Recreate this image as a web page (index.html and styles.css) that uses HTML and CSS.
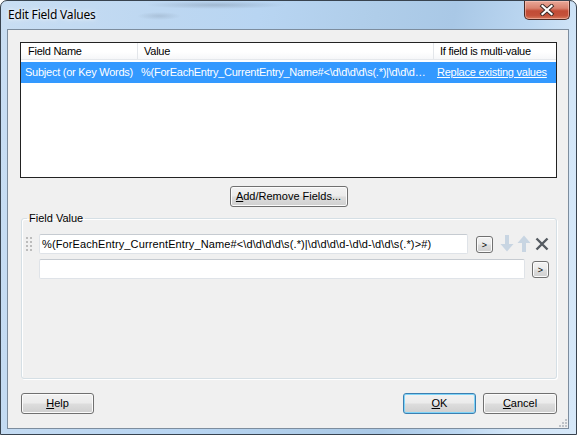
FILE: index.html
```html
<!DOCTYPE html>
<html>
<head>
<meta charset="utf-8">
<title>Edit Field Values</title>
<link rel="stylesheet" href="styles.css">
</head>
<body>
<div class="window">
  <div class="titlebar">
    <span class="title">Edit Field Values</span>
    <button class="close" aria-label="Close">
      <svg width="16" height="12" viewBox="0 0 16 12">
        <path d="M3.5 2 L12.5 10 M12.5 2 L3.5 10" stroke="#3b2a26" stroke-width="4" stroke-linecap="square" fill="none"/>
        <path d="M3.5 2 L12.5 10 M12.5 2 L3.5 10" stroke="#ffffff" stroke-width="2.2" stroke-linecap="square" fill="none"/>
      </svg>
    </button>
  </div>
  <div class="client">
    <div class="listview">
      <div class="lv-header">
        <div class="col c1">Field Name</div>
        <div class="col c2">Value</div>
        <div class="col c3">If field is multi-value</div>
      </div>
      <div class="lv-row selected">
        <div class="col c1">Subject (or Key Words)</div>
        <div class="col c2">%(ForEachEntry_CurrentEntry_Name#&lt;\d\d\d\d\s(.*)|\d\d\d\d-\d\d-\d\d\s(.*)&gt;#)</div>
        <div class="col c3"><span class="link">Replace existing values</span></div>
      </div>
    </div>

    <button class="btn addremove"><u>A</u>dd/Remove Fields...</button>

    <fieldset class="group">
      <legend>Field Value</legend>
      <div class="value-row first">
        <svg class="grip" width="6" height="14" viewBox="0 0 6 14">
          <g fill="#bcbcbc">
            <rect x="0" y="0" width="2" height="2"/><rect x="4" y="0" width="2" height="2"/>
            <rect x="0" y="4" width="2" height="2"/><rect x="4" y="4" width="2" height="2"/>
            <rect x="0" y="8" width="2" height="2"/><rect x="4" y="8" width="2" height="2"/>
            <rect x="0" y="12" width="2" height="2"/><rect x="4" y="12" width="2" height="2"/>
          </g>
        </svg>
        <div class="textbox wide1">%(ForEachEntry_CurrentEntry_Name#&lt;\d\d\d\d\s(.*)|\d\d\d\d-\d\d-\d\d\s(.*)&gt;#)</div>
        <button class="btn small">&gt;</button>
        <svg class="arrow down" width="14" height="17" viewBox="0 0 14 17">
          <path d="M5 0 H9 V9 H13.5 L7 16.5 L0.5 9 H5 Z" fill="#c8d5e2"/>
        </svg>
        <svg class="arrow up" width="14" height="17" viewBox="0 0 14 17">
          <path d="M5 17 H9 V8 H13.5 L7 0.5 L0.5 8 H5 Z" fill="#c8d5e2"/>
        </svg>
        <svg class="remove" width="14" height="14" viewBox="0 0 14 14">
          <path d="M1.5 1.5 L12.5 12.5 M12.5 1.5 L1.5 12.5" stroke="#555b61" stroke-width="2.4" fill="none"/>
        </svg>
      </div>
      <div class="value-row second">
        <div class="textbox wide2"></div>
        <button class="btn small">&gt;</button>
      </div>
    </fieldset>

    <div class="footer">
      <button class="btn action"><u>H</u>elp</button>
      <button class="btn action ok"><u>O</u>K</button>
      <button class="btn action cancel"><u>C</u>ancel</button>
    </div>

    <svg class="sizegrip" width="9" height="9" viewBox="0 0 9 9">
      <g fill="#bfc3c8">
        <rect x="7" y="1" width="2" height="2"/>
        <rect x="4" y="4" width="2" height="2"/><rect x="7" y="4" width="2" height="2"/>
        <rect x="1" y="7" width="2" height="2"/><rect x="4" y="7" width="2" height="2"/><rect x="7" y="7" width="2" height="2"/>
      </g>
    </svg>
  </div>
</div>
</body>
</html>
```

FILE: styles.css
```css
* {
  box-sizing: border-box;
}

html, body {
  margin: 0;
  padding: 0;
}

body {
  width: 577px;
  height: 435px;
  overflow: hidden;
  background: #ffffff;
  font-family: "Liberation Sans", Arial, sans-serif;
  font-size: 11px;
  color: #000;
}

.window {
  width: 577px;
  height: 435px;
  border: 1px solid #38434f;
  border-radius: 7px 7px 0 0;
  display: flex;
  flex-direction: column;
  background:
    radial-gradient(ellipse 70px 4px at 215px 4px, rgba(70, 80, 95, 0.22), rgba(70, 80, 95, 0) 100%),
    radial-gradient(ellipse 22px 4px at 158px 15px, rgba(70, 80, 95, 0.16), rgba(70, 80, 95, 0) 100%),
    linear-gradient(100deg, #c9def3 0%, #bdd7f1 25%, #b8d5f2 40%, #afcde9 58%, #a9c8e6 70%, #bcd7f1 82%, #d3e6f8 90%, #d6e8f9 100%);
}

.titlebar {
  height: 28px;
  flex: none;
  display: flex;
  align-items: flex-start;
  padding-left: 7px;
}

.title {
  font-family: "Noto Sans", "Open Sans", sans-serif;
  font-size: 12px;
  letter-spacing: -0.2px;
  line-height: 16px;
  margin-top: 6px;
  color: #000;
  text-shadow: 0 0 6px rgba(255, 255, 255, 0.9), 0 0 3px rgba(255, 255, 255, 0.9);
}

.close {
  margin-left: auto;
  margin-right: 6px;
  width: 46px;
  height: 19px;
  padding: 0;
  border: 1px solid #4a2a24;
  border-top: none;
  border-radius: 0 0 5px 5px;
  background: linear-gradient(#e9a898 0%, #d9826f 40%, #c24c36 55%, #c4513a 80%, #d77a5c 100%);
  box-shadow: inset 0 0 0 1px rgba(255, 210, 200, 0.5);
  display: flex;
  align-items: center;
  justify-content: center;
}

.client {
  flex: 1;
  margin: 0 7px 5px 6px;
  border: 1px solid #7d8d9e;
  background: #f0f0f0;
  padding: 12px 11px 0 12px;
  display: flex;
  flex-direction: column;
  position: relative;
}

/* list view */
.listview {
  width: 537px;
  height: 136px;
  flex: none;
  border: 1px solid #222;
  background: #fff;
  letter-spacing: -0.25px;
}

.lv-header {
  display: flex;
  height: 17px;
  border-bottom: 1px solid #e5e8ec;
  background: linear-gradient(#ffffff 0%, #ffffff 55%, #f6f7f9 100%);
}

.lv-header .col {
  line-height: 16px;
  border-right: 1px solid #e3e6ea;
}

.lv-header .c1 { padding-left: 7px; }
.lv-header .c2 { padding-left: 6px; }
.lv-header .c3 { padding-left: 6px; border-right: none; }

.col {
  white-space: nowrap;
  overflow: hidden;
  flex: none;
}

.c1 { width: 117px; }
.c2 { width: 296px; }
.c3 { width: 122px; }

.lv-row {
  display: flex;
  height: 21px;
  margin-top: 2px;
  line-height: 21px;
}

.lv-row.selected {
  background: #3399ff;
  color: #fff;
}

.lv-row .c1 { padding-left: 4px; }
.lv-row .c2 { padding-left: 3px; padding-right: 6px; text-overflow: ellipsis; }
.lv-row .c3 { padding-left: 3px; }

.link {
  text-decoration: underline;
}

/* buttons */
.btn {
  font-family: inherit;
  font-size: 11px;
  color: #000;
  height: 21px;
  padding: 0;
  border: 1px solid #707070;
  border-radius: 3px;
  background: linear-gradient(#f2f2f2 0%, #ebebeb 48%, #dddddd 52%, #cfcfcf 100%);
  box-shadow: inset 0 0 0 1px #fbfbfb;
  line-height: 19px;
  text-align: center;
}

.addremove {
  flex: none;
  width: 118px;
  margin: 8px auto 0 auto;
}

/* group box */
.group {
  flex: none;
  margin: 5px 0 0 1px;
  width: 536px;
  height: 167px;
  padding: 0;
  border: 1px solid #d5dfe5;
  border-radius: 3px;
  box-shadow: inset 1px 1px 0 #ffffff, 1px 1px 0 #ffffff;
}

.group legend {
  margin-left: 5px;
  padding: 0 2px;
  line-height: 13px;
  font-size: 11px;
}

.value-row {
  display: flex;
  align-items: flex-start;
}

.value-row.first {
  margin-top: 9px;
  padding-left: 4px;
}

.value-row.second {
  margin-top: 5px;
  padding-left: 17px;
}

.grip {
  margin-top: 3px;
  flex: none;
}

.textbox {
  height: 20px;
  flex: none;
  background: #fff;
  border: 1px solid #dfe3e8;
  border-top-color: #c6cbd1;
  border-radius: 2px;
  padding-left: 2px;
  line-height: 18px;
  white-space: nowrap;
  overflow: hidden;
  letter-spacing: 0.12px;
}

.wide1 {
  width: 429px;
  margin-left: 7px;
}

.wide2 {
  width: 486px;
}

.btn.small {
  width: 17px;
  height: 17px;
  margin-top: 2px;
  font-size: 9px;
  line-height: 14px;
  flex: none;
}

.first .btn.small { margin-left: 8px; }
.second .btn.small { margin-left: 7px; }

.arrow.down { margin-left: 7px; margin-top: 1px; flex: none; }
.arrow.up { margin-left: 3px; margin-top: 1px; flex: none; }
.remove { margin-left: 4px; margin-top: 3px; flex: none; }

/* footer */
.footer {
  display: flex;
  margin-top: 14px;
  padding-left: 1px;
}

.action {
  width: 73px;
}

.ok {
  margin-left: auto;
  border-color: #3c7fb1;
  box-shadow: inset 0 0 0 1px #7fd4f8;
}

.cancel {
  margin-left: 7px;
  width: 74px;
}

.sizegrip {
  position: absolute;
  right: 1px;
  bottom: 1px;
}
```
